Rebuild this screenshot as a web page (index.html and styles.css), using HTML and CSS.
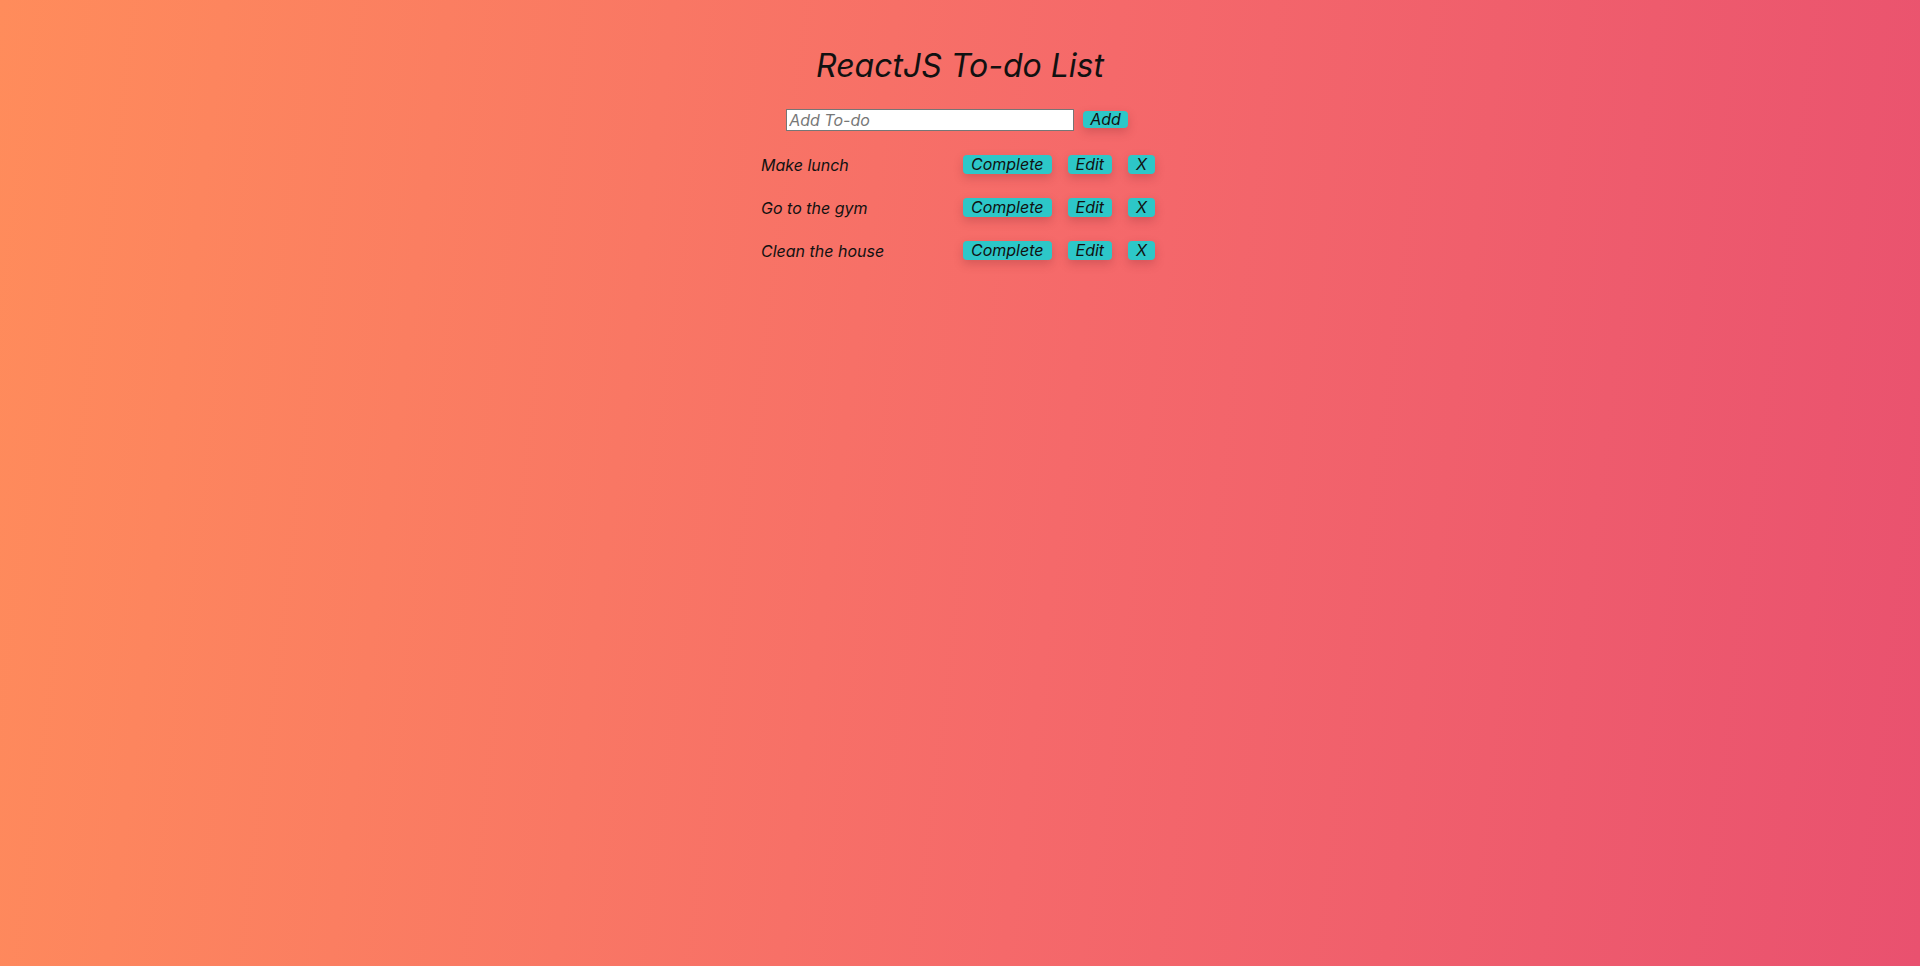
FILE: index.html
```html
<!DOCTYPE html>
<html lang="en">
<head>
<meta charset="utf-8">
<title>ReactJS To-do List</title>
<link rel="stylesheet" href="styles.css">
</head>
<body>
<div class="app">
  <h1 class="title">ReactJS To-do List</h1>
  <form class="add-form">
    <input class="add-input" type="text" placeholder="Add To-do">
    <button class="btn add-btn" type="button">Add</button>
  </form>
  <ul class="todo-list">
    <li class="todo">
      <span class="todo-text">Make lunch</span>
      <div class="todo-actions">
        <button class="btn" type="button">Complete</button>
        <button class="btn" type="button">Edit</button>
        <button class="btn" type="button">X</button>
      </div>
    </li>
    <li class="todo">
      <span class="todo-text">Go to the gym</span>
      <div class="todo-actions">
        <button class="btn" type="button">Complete</button>
        <button class="btn" type="button">Edit</button>
        <button class="btn" type="button">X</button>
      </div>
    </li>
    <li class="todo">
      <span class="todo-text">Clean the house</span>
      <div class="todo-actions">
        <button class="btn" type="button">Complete</button>
        <button class="btn" type="button">Edit</button>
        <button class="btn" type="button">X</button>
      </div>
    </li>
  </ul>
</div>
</body>
</html>
```
FILE: styles.css
```css
html, body {
  margin: 0;
  height: 100%;
}
body {
  background: linear-gradient(97deg, #ff8c5b 0%, #f5696a 55%, #e9516f 100%);
  font-family: Inter, "Noto Sans", sans-serif;
  font-style: italic;
  color: #111;
}
.app {
  display: flex;
  flex-direction: column;
  align-items: center;
  padding-top: 46px;
}
.title {
  margin: 0;
  font-size: 32px;
  font-weight: 400;
  line-height: 40px;
}
.add-form {
  display: flex;
  align-items: flex-start;
  gap: 9px;
  margin-top: 23px;
  margin-left: -6px;
}
.add-input {
  width: 288px;
  height: 22px;
  box-sizing: border-box;
  border: 1px solid #767676;
  padding: 0 2px;
  font-family: inherit;
  font-style: italic;
  font-size: 16px;
  background: #fff;
}
.add-input::placeholder {
  color: #777;
}
.btn {
  background: #2dc7c8;
  border: none;
  border-radius: 4px;
  padding: 0 8px;
  height: 19px;
  line-height: 19px;
  font-family: inherit;
  font-style: italic;
  font-size: 16px;
  color: #111;
  box-shadow: 0 4px 10px rgba(120, 30, 40, 0.25);
  cursor: pointer;
}
.add-btn {
  height: 17px;
  line-height: 17px;
  padding: 0 7px;
  margin-top: 2px;
}
.todo-list {
  list-style: none;
  margin: 0;
  padding: 0;
  margin-top: 24px;
  width: 394px;
  margin-left: -4px;
  display: flex;
  flex-direction: column;
  gap: 24px;
}
.todo {
  display: flex;
  align-items: center;
  height: 19px;
}
.todo-text {
  width: 206px;
  font-size: 16px;
}
.todo-actions {
  display: flex;
  gap: 16px;
}
```
